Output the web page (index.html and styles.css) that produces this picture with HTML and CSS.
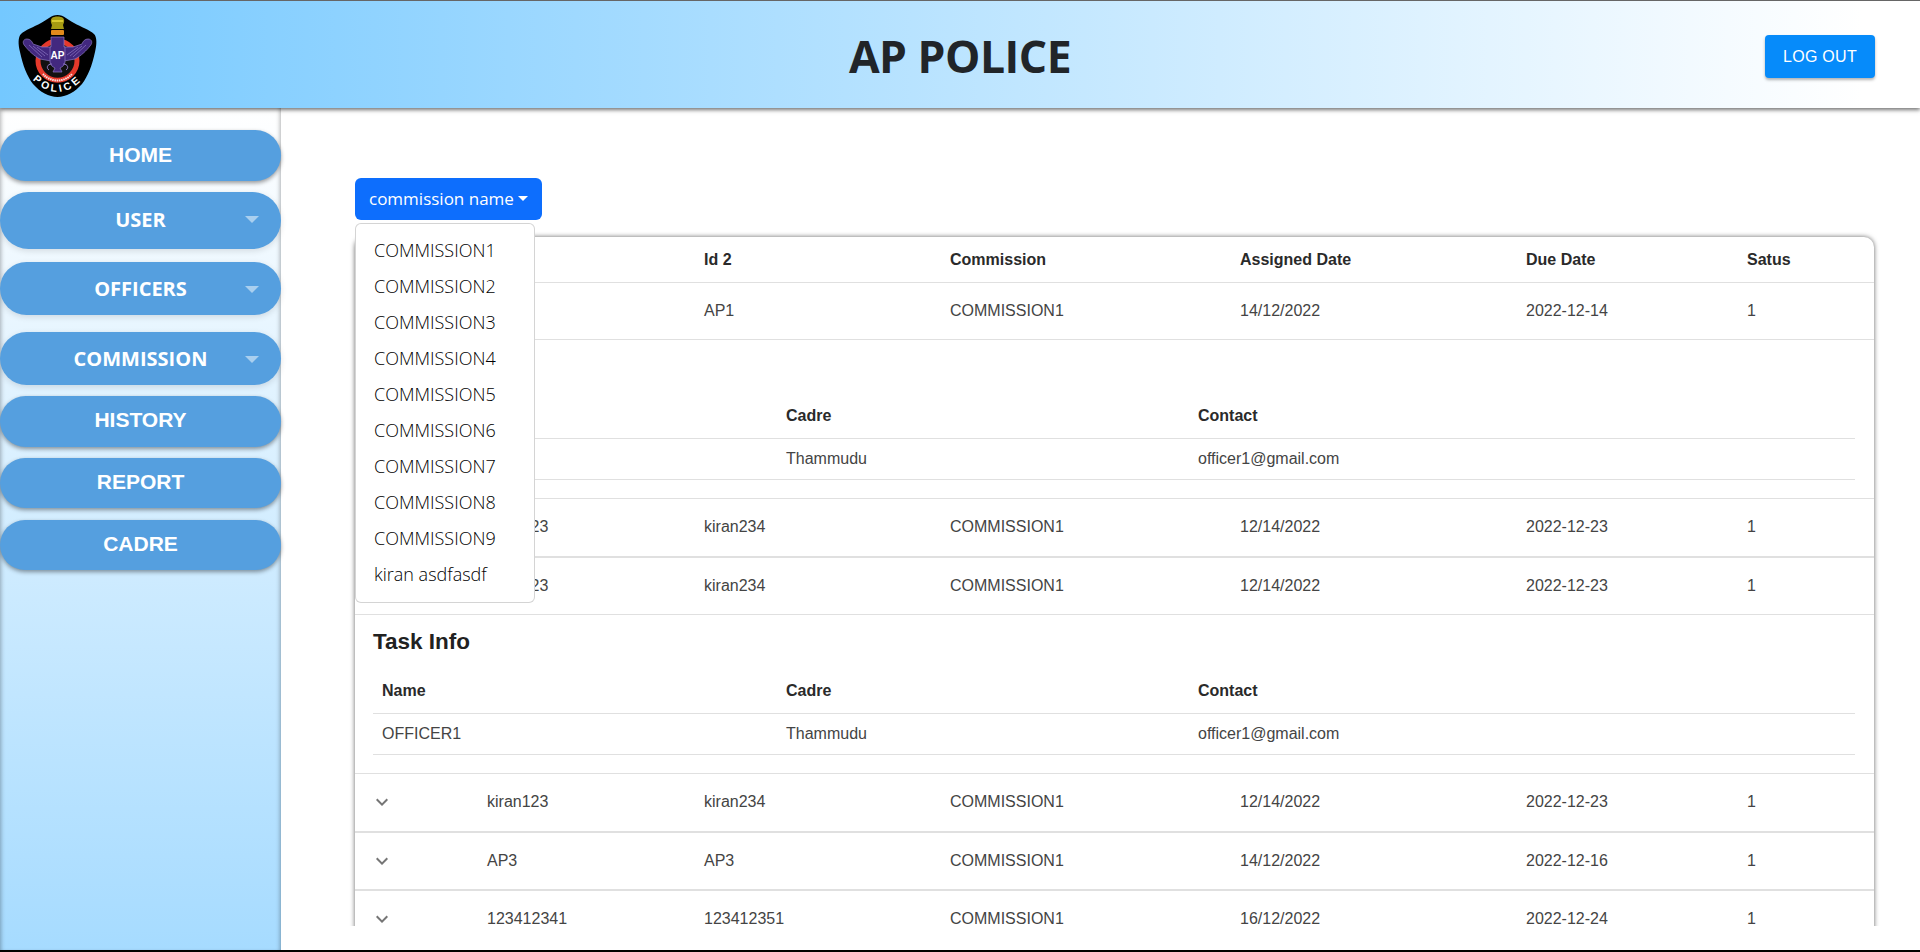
FILE: index.html
```html
<!DOCTYPE html>
<html lang="en">
<head>
    <meta charset="UTF-8">
    <meta name="viewport" content="width=device-width, initial-scale=1.0">
    <title>AP Police</title>
    <link rel="stylesheet" href="styles.css">
</head>
<body>

    <div class="page">
        <header class="topbar">
            <div class="logo-box">
                <svg class="logo" viewBox="0 0 80 84" role="img" aria-label="AP Police emblem">
                    <defs>
                        <path id="police-arc" d="M12 63 Q39.5 93 67 63"/>
                        <g id="wing">
                            <path d="M33 33 L24 33 L15 30 C14 27 12 25 9 25 C5 25 4 29 7 32 C10 36 16 42 22 45 L33 47 Z" fill="#42287f" stroke="#8d78c4" stroke-width=".7"/>
                            <path d="M11 31 L24 43 M15 32 L27 42 M19 33 L30 41" stroke="#8d78c4" stroke-width=".7" fill="none"/>
                        </g>
                    </defs>
                    <path d="M39.5 1 C46 1 50 6 56 9 C63 13 72 16 76 20 C79 23 79 30 77 38 C74 52 70 62 64 70 C57 78 48 83 39.5 83 C31 83 22 78 15 70 C9 62 5 52 2 38 C0 30 0 23 3 20 C7 16 16 13 23 9 C29 6 33 1 39.5 1 Z" fill="#000"/>
                    <!-- lion capital -->
                    <path d="M34 4 C36 2 43 2 45 4 C47 6 46 9 45 11 L46 15 L33 15 L34 11 C33 9 32 6 34 4 Z" fill="#a59a12"/>
                    <rect x="34" y="6" width="11" height="2" fill="#d8c92e"/>
                    <rect x="33" y="16" width="13" height="5" rx="1" fill="#e08a1c"/>
                    <!-- ring -->
                    <circle cx="39.5" cy="46.8" r="19.5" fill="#111" stroke="#e5392b" stroke-width="5"/>
                    <path d="M25 60 A19.5 19.5 0 0 0 54 60" fill="none" stroke="#fff" stroke-width="2" stroke-dasharray="1.5 .7" opacity=".85"/>
                    <!-- eagle -->
                    <use href="#wing"/>
                    <use href="#wing" transform="matrix(-1 0 0 1 79 0)"/>
                    <path d="M33 23 H46 V33 H47 V48 C47 51 44 53 42 54 L44 58 H35 L37 54 C35 53 32 51 32 48 V33 H33 Z" fill="#42287f" stroke="#8d78c4" stroke-width=".7"/>
                    <path d="M34 50 C29 50 28 54 31 56 M45 50 C50 50 51 54 48 56" fill="none" stroke="#8d78c4" stroke-width="1"/>
                    <text class="logo-ap" x="39.5" y="44.5" text-anchor="middle">AP</text>
                    <text class="logo-police">
                        <textPath href="#police-arc" startOffset="50%" text-anchor="middle">POLICE</textPath>
                    </text>
                </svg>
            </div>
            <h1 class="title">AP POLICE</h1>
            <div class="logout-box">
                <button class="logout-btn">LOG OUT</button>
            </div>
        </header>

        <div class="body-row">
            <!-- left menu -->
            <nav class="sidebar">
                <a href="#" class="side-btn nav-home">HOME</a>
                <a href="#" class="side-btn side-drop nav-user">USER<span class="side-caret"></span></a>
                <a href="#" class="side-btn side-drop nav-officers">OFFICERS<span class="side-caret"></span></a>
                <a href="#" class="side-btn side-drop nav-commission">COMMISSION<span class="side-caret"></span></a>
                <a href="#" class="side-btn nav-history">HISTORY</a>
                <a href="#" class="side-btn nav-report">REPORT</a>
                <a href="#" class="side-btn nav-cadre">CADRE</a>
            </nav>

            <main class="content">
                <div class="dropdown">
                    <button class="dropdown-btn">commission name<span class="dropdown-caret"></span></button>
                    <ul class="dropdown-menu">
                        <li>COMMISSION1</li>
                        <li>COMMISSION2</li>
                        <li>COMMISSION3</li>
                        <li>COMMISSION4</li>
                        <li>COMMISSION5</li>
                        <li>COMMISSION6</li>
                        <li>COMMISSION7</li>
                        <li>COMMISSION8</li>
                        <li>COMMISSION9</li>
                        <li>kiran asdfasdf</li>
                    </ul>
                </div>

                <div class="table-clip">
                    <div class="table-paper">
                        <table class="task-table">
                            <colgroup>
                                <col class="col-toggle">
                                <col class="col-id1">
                                <col class="col-id2">
                                <col class="col-commission">
                                <col class="col-assigned">
                                <col class="col-due">
                                <col class="col-status">
                            </colgroup>
                            <thead>
                                <tr>
                                    <th></th>
                                    <th>Id 1</th>
                                    <th>Id 2</th>
                                    <th>Commission</th>
                                    <th>Assigned Date</th>
                                    <th>Due Date</th>
                                    <th>Satus</th>
                                </tr>
                            </thead>
                            <tbody>
                                <tr>
                                    <td><svg class="chevron" viewBox="0 0 24 24"><path d="M7.41 15.41 12 10.83l4.59 4.58L18 14l-6-6-6 6z"/></svg></td>
                                    <td>AP1</td>
                                    <td>AP1</td>
                                    <td>COMMISSION1</td>
                                    <td>14/12/2022</td>
                                    <td>2022-12-14</td>
                                    <td>1</td>
                                </tr>
                                <tr class="detail-row">
                                    <td colspan="7">
                                        <h6 class="detail-title">Task Info</h6>
                                        <table class="info-table">
                                            <colgroup>
                                                <col class="col-name">
                                                <col class="col-cadre">
                                                <col>
                                            </colgroup>
                                            <thead>
                                                <tr><th>Name</th><th>Cadre</th><th>Contact</th></tr>
                                            </thead>
                                            <tbody>
                                                <tr><td>OFFICER1</td><td>Thammudu</td><td>officer1@gmail.com</td></tr>
                                            </tbody>
                                        </table>
                                    </td>
                                </tr>
                                <tr class="closed">
                                    <td><svg class="chevron" viewBox="0 0 24 24"><path d="M7.41 8.59 12 13.17l4.59-4.58L18 10l-6 6-6-6 1.41-1.41z"/></svg></td>
                                    <td>kiran123</td>
                                    <td>kiran234</td>
                                    <td>COMMISSION1</td>
                                    <td>12/14/2022</td>
                                    <td>2022-12-23</td>
                                    <td>1</td>
                                </tr>
                                <tr>
                                    <td><svg class="chevron" viewBox="0 0 24 24"><path d="M7.41 15.41 12 10.83l4.59 4.58L18 14l-6-6-6 6z"/></svg></td>
                                    <td>kiran123</td>
                                    <td>kiran234</td>
                                    <td>COMMISSION1</td>
                                    <td>12/14/2022</td>
                                    <td>2022-12-23</td>
                                    <td>1</td>
                                </tr>
                                <tr class="detail-row">
                                    <td colspan="7">
                                        <h6 class="detail-title">Task Info</h6>
                                        <table class="info-table">
                                            <colgroup>
                                                <col class="col-name">
                                                <col class="col-cadre">
                                                <col>
                                            </colgroup>
                                            <thead>
                                                <tr><th>Name</th><th>Cadre</th><th>Contact</th></tr>
                                            </thead>
                                            <tbody>
                                                <tr><td>OFFICER1</td><td>Thammudu</td><td>officer1@gmail.com</td></tr>
                                            </tbody>
                                        </table>
                                    </td>
                                </tr>
                                <tr class="closed">
                                    <td><svg class="chevron" viewBox="0 0 24 24"><path d="M7.41 8.59 12 13.17l4.59-4.58L18 10l-6 6-6-6 1.41-1.41z"/></svg></td>
                                    <td>kiran123</td>
                                    <td>kiran234</td>
                                    <td>COMMISSION1</td>
                                    <td>12/14/2022</td>
                                    <td>2022-12-23</td>
                                    <td>1</td>
                                </tr>
                                <tr class="closed short">
                                    <td><svg class="chevron" viewBox="0 0 24 24"><path d="M7.41 8.59 12 13.17l4.59-4.58L18 10l-6 6-6-6 1.41-1.41z"/></svg></td>
                                    <td>AP3</td>
                                    <td>AP3</td>
                                    <td>COMMISSION1</td>
                                    <td>14/12/2022</td>
                                    <td>2022-12-16</td>
                                    <td>1</td>
                                </tr>
                                <tr class="closed">
                                    <td><svg class="chevron" viewBox="0 0 24 24"><path d="M7.41 8.59 12 13.17l4.59-4.58L18 10l-6 6-6-6 1.41-1.41z"/></svg></td>
                                    <td>123412341</td>
                                    <td>123412351</td>
                                    <td>COMMISSION1</td>
                                    <td>16/12/2022</td>
                                    <td>2022-12-24</td>
                                    <td>1</td>
                                </tr>
                            </tbody>
                        </table>
                    </div>
                </div>
            </main>
        </div>
    </div>

</body>
</html>
```

FILE: styles.css
```css
* {
    box-sizing: border-box;
}
html, body {
    margin: 0;
    padding: 0;
}
body {
    font-family: 'Liberation Sans', Arial, sans-serif;
    background-color: #000;
    overflow: hidden;
}
.page {
    display: flex;
    flex-direction: column;
    height: 950px;
    background-color: white;
}

/* top bar */
.topbar {
    position: relative;
    z-index: 2;
    flex: none;
    display: grid;
    grid-template-columns: 1fr auto 1fr;
    align-items: center;
    height: 108px;
    border-top: 1px solid #666;
    background: linear-gradient(to right, #74c8ff, #fff 97%);
    box-shadow: 0 2px 4px rgba(0,0,0,0.55);
}
.logo-box {
    padding-left: 18px;
    padding-top: 2px;
    display: flex;
}
.logo {
    width: 80px;
    height: 84px;
}
.logo-ap {
    font-size: 10px;
    font-weight: bold;
    fill: white;
}
.logo-police {
    font-size: 10.5px;
    font-weight: bold;
    fill: white;
    letter-spacing: 3px;
}
.title {
    margin: 2px 0 0;
    font-family: 'Open Sans', sans-serif;
    font-size: 44.5px;
    font-weight: 700;
    letter-spacing: -0.5px;
    color: #212529;
}
.logout-box {
    display: flex;
    justify-content: flex-end;
    padding-right: 45px;
    padding-top: 4px;
}
.logout-btn {
    width: 110px;
    height: 43px;
    border: none;
    border-radius: 4px;
    background-color: #068bfa;
    color: white;
    font-family: inherit;
    font-size: 16px;
    letter-spacing: 0.3px;
    box-shadow: 0 2px 3px rgba(0,0,0,0.3);
}

/* left menu */
.body-row {
    flex: 1;
    display: flex;
    min-height: 0;
}
.sidebar {
    flex: none;
    width: 281px;
    padding-top: 22px;
    background: linear-gradient(to bottom, #fff, #a6dbff);
    box-shadow: inset 4px 0 4px -3px rgba(0,0,0,0.3), inset -4px 0 4px -3px rgba(0,0,0,0.3);
}
.side-btn {
    position: relative;
    display: flex;
    align-items: center;
    justify-content: center;
    padding-bottom: 2px;
    border-radius: 30px;
    background-color: #559fdf;
    color: white;
    font-size: 21px;
    font-weight: bold;
    text-decoration: none;
    box-shadow: 0 2px 4px rgba(0,0,0,0.4);
}
.side-drop {
    font-family: 'Open Sans', sans-serif;
    font-size: 20px;
    box-shadow: 0 2px 6px rgba(0,0,0,0.12);
}
.side-caret {
    position: absolute;
    right: 22px;
    top: 50%;
    margin-top: -3px;
    border-left: 7px solid transparent;
    border-right: 7px solid transparent;
    border-top: 7px solid #a9cfef;
}
.nav-home { height: 51px; margin-bottom: 11px; }
.nav-user { height: 57px; margin-bottom: 13px; }
.nav-user .side-caret { margin-top: -5px; }
.nav-officers { height: 53px; margin-bottom: 17px; padding-bottom: 0; }
.nav-commission { height: 53px; margin-bottom: 11px; padding-bottom: 0; }
.nav-history { height: 51px; margin-bottom: 11px; padding-bottom: 4px; }
.nav-report { height: 50px; margin-bottom: 12px; }
.nav-cadre { height: 50px; }

/* main part */
.content {
    flex: 1;
    min-width: 0;
    display: flex;
    flex-direction: column;
    padding: 70px 46px 24px 74px;
}
.dropdown {
    position: relative;
    flex: none;
    align-self: flex-start;
    margin-bottom: 11px;
}
.dropdown-btn {
    display: flex;
    align-items: center;
    height: 42px;
    padding: 0 14px 2px 14px;
    border: none;
    border-radius: 6px;
    background-color: #0d6efd;
    color: white;
    font-family: 'Open Sans', sans-serif;
    font-size: 17px;
}
.dropdown-caret {
    margin-left: 4px;
    border-left: 5px solid transparent;
    border-right: 5px solid transparent;
    border-top: 5px solid white;
}
.dropdown-menu {
    position: absolute;
    z-index: 3;
    top: 45px;
    left: 0;
    width: 180px;
    margin: 0;
    padding: 8px 0 10px;
    list-style-type: none;
    background-color: white;
    border: 1px solid rgba(0,0,0,0.17);
    border-radius: 6px;
}
.dropdown-menu li {
    height: 36px;
    line-height: 36px;
    padding-left: 18px;
    font-family: 'Open Sans', sans-serif;
    font-size: 18px;
    font-weight: 300;
    color: #000;
}

/* table */
.table-clip {
    flex: 1;
    min-height: 0;
    overflow: hidden;
    margin: 0 -6px;
    padding: 6px 6px 0;
}
.table-paper {
    background-color: white;
    border-radius: 10px;
    box-shadow: 0 0 5px rgba(0,0,0,0.6);
}
.task-table {
    width: 100%;
    table-layout: fixed;
    border-collapse: separate;
    border-spacing: 0;
    font-size: 16px;
    color: #444;
}
.col-toggle { width: 116px; }
.col-id1 { width: 217px; }
.col-id2 { width: 246px; }
.col-commission { width: 290px; }
.col-assigned { width: 286px; }
.col-due { width: 221px; }
.task-table > thead th {
    height: 46px;
    padding: 0 16px;
    text-align: left;
    font-weight: bold;
    color: #2a2a2a;
    border-bottom: 1px solid #e0e0e0;
}
.task-table > tbody > tr > td {
    height: 57px;
    padding: 0 16px;
    border-bottom: 1px solid #e0e0e0;
}
.task-table > tbody > tr.closed > td {
    height: 59px;
    padding-bottom: 1px;
    border-bottom-width: 2px;
}
.task-table > tbody > tr.short > td {
    height: 58px;
}
.task-table > tbody > tr > td:first-child {
    padding-left: 15px;
}
.chevron {
    display: block;
    width: 24px;
    height: 24px;
    fill: rgba(0,0,0,0.54);
}
.task-table > tbody > tr.detail-row > td {
    height: 159px;
    padding: 11px 19px 18px 18px;
}
.detail-title {
    margin: 0 0 10px;
    font-size: 22.5px;
    line-height: 32px;
    font-weight: bold;
    color: #212121;
}
.info-table {
    width: 100%;
    table-layout: fixed;
    border-collapse: separate;
    border-spacing: 0;
}
.col-name { width: 404px; }
.col-cadre { width: 412px; }
.info-table th {
    height: 46px;
    padding: 0 9px;
    text-align: left;
    font-weight: bold;
    color: #2a2a2a;
    border-bottom: 1px solid #e0e0e0;
}
.info-table td {
    height: 41px;
    padding: 0 9px;
    border-bottom: 1px solid #e0e0e0;
}
```
